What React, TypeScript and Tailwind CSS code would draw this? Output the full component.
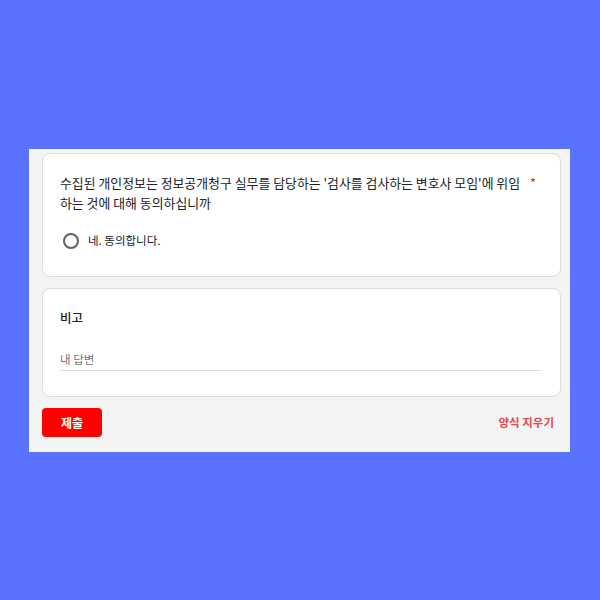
import React from "react";

export default function App() {
  const font = { fontFamily: '"Noto Sans CJK KR", "Noto Sans", sans-serif' };
  return (
    <div
      className="w-[600px] h-[600px] bg-[#5a73fe] pt-[149px] pl-[29px]"
      style={font}
    >
      <div className="w-[541px] h-[303px] bg-[#f4f4f4] pt-[4px] pl-[13px] pr-[9px]">
        <div className="h-[124px] bg-white rounded-[8px] border border-[#dadce0] pt-[19px] pl-[17px] pr-[10px]">
          <div className="flex">
            <div className="text-[12.9px] leading-[20px] text-[#202124] whitespace-nowrap">
              수집된 개인정보는 정보공개청구 실무를 담당하는 '검사를 검사하는 변호사 모임'에 위임
              <br />
              하는 것에 대해 동의하십니까
            </div>
            <span className="text-[#d93025] text-[13px] leading-[20px] ml-[10px]">*</span>
          </div>
          <div className="flex items-center mt-[20px] h-[16px]">
            <div className="w-[16px] h-[16px] rounded-full border-2 border-[#5f6368] ml-[3px]" />
            <span className="ml-[9px] text-[11.5px] text-[#202124]">네. 동의합니다.</span>
          </div>
        </div>
        <div className="h-[109px] mt-[11px] bg-white rounded-[8px] border border-[#dadce0] pt-[19px] pl-[17px] pr-[19px]">
          <div className="text-[12.5px] leading-[20px] font-medium text-[#202124]">비고</div>
          <div className="mt-[21px] h-[22px] border-b border-[#dadce0] text-[11.5px] leading-[20px] text-[#70757a]">
            내 답변
          </div>
        </div>
        <div className="flex items-center justify-between mt-[11px]">
          <div className="w-[60px] h-[29px] rounded-[4px] bg-[#ff0000] flex items-center justify-center text-white text-[12px] font-bold">
            제출
          </div>
          <span className="mr-[7px] text-[11.5px] font-bold text-[#e5484d]">양식 지우기</span>
        </div>
      </div>
    </div>
  );
}
